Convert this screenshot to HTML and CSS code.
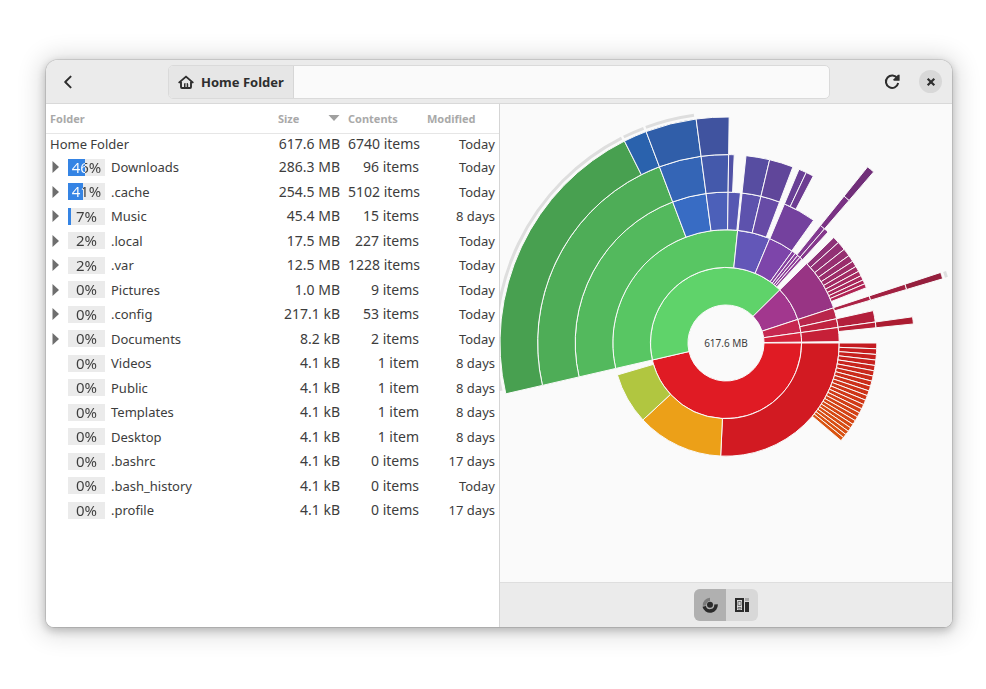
FILE: index.html
```html
<!DOCTYPE html>
<html lang="en">
<head>
  <meta charset="UTF-8">
  <meta name="viewport" content="width=device-width, initial-scale=1.0">
  <title>Disk Usage Analyzer</title>
  <link rel="stylesheet" href="styles.css">
</head>
<body>
  <div class="window">
    <header class="headerbar">
      <button class="icon-button" type="button" aria-label="Back">
        <svg width="16" height="16" viewBox="0 0 16 16"><path d="M10.6 2.6 5.2 8l5.4 5.4" fill="none" stroke="currentColor" stroke-width="2" stroke-linecap="round" stroke-linejoin="round"/></svg>
      </button>
      <nav class="pathbar">
        <button class="path-button" type="button">
          <svg width="16" height="16" viewBox="0 0 16 16"><path d="M1.3 8.4 8 2.6l6.7 5.800M3 8V13q0 1 1 1h8q1 0 1-1V8" fill="none" stroke="currentColor" stroke-width="1.900" stroke-linecap="round" stroke-linejoin="round"/><path d="M6 14V10.200q0-1.200 1.200-1.200h.3v5zM8.700 14V9h.3q1.200 0 1.200 1.200V14z" fill="currentColor"/></svg>
          Home Folder
        </button>
      </nav>
      <div class="header-end">
        <button class="icon-button" type="button" aria-label="Reload">
          <svg width="18" height="18" viewBox="0 0 18 18"><path d="M14.4 5.4A6.2 6.2 0 1 0 15.2 10" fill="none" stroke="currentColor" stroke-width="2"/><path d="M16.6 1.8v6h-6v-1.6l4.4-4.4z" fill="currentColor"/></svg>
        </button>
        <button class="close-button" type="button" aria-label="Close">
          <svg width="10" height="10" viewBox="0 0 10 10"><path d="M1.7 1.7l6.6 6.6M8.3 1.7 1.7 8.3" stroke="currentColor" stroke-width="2.2"/></svg>
        </button>
      </div>
    </header>
    <main class="content">
      <section class="folders">
        <table class="tree">
          <thead>
            <tr>
              <th class="col-name">Folder</th>
              <th class="col-size"><div class="sort">Size <svg width="12" height="6" viewBox="0 0 12 6"><path d="M.5 0h11L6 6z" fill="#a0a09f"/></svg></div></th>
              <th class="col-contents">Contents</th>
              <th class="col-modified">Modified</th>
            </tr>
          </thead>
          <tbody id="rows"></tbody>
        </table>
      </section>
      <section class="chart-pane">
        <svg class="chart" id="chart" viewBox="-226 -239 452 478" role="img" aria-label="Rings chart"></svg>
        <footer class="actionbar">
          <div class="switcher">
            <button class="switch active" type="button" aria-label="Rings chart">
              <svg width="16" height="16" viewBox="0 0 16 16"><path d="M2.4 8.6A5.800 5.800 0 0 1 8 2.4" fill="none" stroke="#7b7b7b" stroke-width="3.4"/><path d="M2.2 9.4A6 6 0 0 0 14 7.4" fill="none" stroke="#2b2b2b" stroke-width="3.6"/><circle cx="8" cy="7.800" r="3" fill="#2b2b2b"/></svg>
            </button>
            <button class="switch" type="button" aria-label="Treemap chart">
              <svg width="16" height="16" viewBox="0 0 16 16"><path d="M2 2h7v12H2z" fill="#ddd" stroke="#2b2b2b" stroke-width="2"/><path d="M4 4.500h3v4H4zM4 10.500h3v1.500H4z" fill="#d0d0d0" stroke="#777" stroke-width="1"/><path d="M11 5h4v10h-4z" fill="#2b2b2b"/><path d="M11 1h4v3h-4z" fill="#aaa"/></svg>
            </button>
          </div>
        </footer>
      </section>
    </main>
  </div>
  <script src="script.js"></script>
</body>
</html>
```
FILE: styles.css
```css
* {
  box-sizing: border-box;
}
body {
  margin: 0;
  min-height: 100vh;
  padding: 60px 34px 62px 46px;
  display: flex;
  background: #fff;
  color: #3d3d3d;
  font-family: "Noto Sans", sans-serif;
  font-size: 13px;
}
button {
  font: inherit;
  color: #2e2e2e;
  border: none;
  padding: 0;
  background: none;
  display: flex;
  align-items: center;
  justify-content: center;
}
.window {
  flex: 1;
  display: flex;
  flex-direction: column;
  border-radius: 12px 12px 8px 8px;
  overflow: hidden;
  background: #fafafa;
  box-shadow: 0 0 0 1px rgba(0, 0, 0, 0.1), 0 3px 8px 1px rgba(0, 0, 0, 0.2), 0 2px 24px 6px rgba(0, 0, 0, 0.14);
}
.headerbar {
  height: 44px;
  display: flex;
  align-items: center;
  padding: 0 10px 0 5px;
  background: #ebebeb;
  border-bottom: 1px solid #d9d9d9;
}
.icon-button {
  width: 34px;
  height: 34px;
}
.pathbar {
  flex: 1;
  height: 34px;
  display: flex;
  margin: 0 45px 0 83px;
  background: #fafafa;
  border: 1px solid #dadada;
  border-radius: 5px;
  overflow: hidden;
}
.path-button {
  gap: 7px;
  padding: 0 9px;
  background: #e6e6e6;
  border-right: 1px solid #d6d6d6;
  font-weight: bold;
}
.header-end {
  display: flex;
  align-items: center;
  gap: 10px;
}
.close-button {
  width: 23px;
  height: 23px;
  border-radius: 50%;
  background: #d8d8d8;
}
.content {
  flex: 1;
  display: grid;
  grid-template-columns: 1fr 1fr;
}
.folders {
  background: #fff;
}
.tree {
  width: 100%;
  table-layout: fixed;
  border-collapse: collapse;
}
.tree th {
  height: 29px;
  padding: 0 4px;
  border-bottom: 1px solid #e6e6e6;
  color: #a9a9a9;
  font-size: 11px;
  text-align: left;
}
.tree td {
  height: 24px;
  padding: 0 4px;
  line-height: 20px;
  text-align: right;
  white-space: nowrap;
}
.tree tbody tr:nth-child(odd) td {
  height: 25px;
}
.tree tbody tr:first-child td {
  height: 22px;
}
.tree td.name {
  text-align: left;
}
.tree td.number {
  font-size: 14px;
}
.col-size {
  width: 70px;
}
.col-contents {
  width: 79px;
}
.col-modified {
  width: 76px;
}
.sort {
  display: flex;
  align-items: center;
  justify-content: space-between;
}
.entry {
  display: flex;
  align-items: center;
}
.expander {
  width: 18px;
  height: 12px;
  justify-content: flex-start;
  padding-left: 2px;
}
.usage {
  width: 37px;
  height: 17px;
  margin-right: 6px;
  background: linear-gradient(to right, #3584e4 var(--used), #ebebeb var(--used));
}
/* the label turns white where it lies on the blue part */
.usage span {
  display: block;
  background: linear-gradient(to right, #fff var(--used), #3d3d3d var(--used));
  -webkit-background-clip: text;
  background-clip: text;
  color: transparent;
  font-size: 15px;
  line-height: 17px;
  text-align: center;
}
.chart-pane {
  display: flex;
  flex-direction: column;
  border-left: 1px solid #d5d5d5;
}
.chart {
  flex: 1 1 0;
  min-height: 0;
  width: 100%;
}
.chart path {
  stroke: #fafafa;
  stroke-width: 1;
}
.chart .more {
  fill: none;
  stroke: #dedede;
  stroke-width: 3;
}
.chart text {
  font-size: 10px;
  fill: #3d3d3d;
  text-anchor: middle;
}
.actionbar {
  height: 45px;
  display: flex;
  align-items: center;
  justify-content: center;
  background: #ebebeb;
  border-top: 1px solid #dedede;
}
.switcher {
  display: flex;
  border-radius: 6px;
  overflow: hidden;
  background: #d8d8d8;
}
.switch {
  width: 32px;
  height: 32px;
}
.switch.active {
  background: #b0b0b0;
}
```
FILE: script.js
```js
// name, percent, size, contents, modified, has children
const folders = [
  ['Downloads', 46, '286.3 MB', '96 items', 'Today', true],
  ['.cache', 41, '254.5 MB', '5102 items', 'Today', true],
  ['Music', 7, '45.4 MB', '15 items', '8 days', true],
  ['.local', 2, '17.5 MB', '227 items', 'Today', true],
  ['.var', 2, '12.5 MB', '1228 items', 'Today', true],
  ['Pictures', 0, '1.0 MB', '9 items', 'Today', true],
  ['.config', 0, '217.1 kB', '53 items', 'Today', true],
  ['Documents', 0, '8.2 kB', '2 items', 'Today', true],
  ['Videos', 0, '4.1 kB', '1 item', '8 days', false],
  ['Public', 0, '4.1 kB', '1 item', '8 days', false],
  ['Templates', 0, '4.1 kB', '1 item', '8 days', false],
  ['Desktop', 0, '4.1 kB', '1 item', '8 days', false],
  ['.bashrc', 0, '4.1 kB', '0 items', '17 days', false],
  ['.bash_history', 0, '4.1 kB', '0 items', 'Today', false],
  ['.profile', 0, '4.1 kB', '0 items', '17 days', false]
];

function cells(size, contents, modified) {
  return `<td class="number">${size}</td><td class="number">${contents}</td><td>${modified}</td>`;
}

let html = `<tr><td class="name">Home Folder</td>${cells('617.6 MB', '6740 items', 'Today')}</tr>`;
folders.forEach(([name, percent, size, contents, modified, children]) => {
  const arrow = '<svg width="7" height="12" viewBox="0 0 7 12"><path d="M.5 0 7 6 .5 12z" fill="#6e6e6e"/></svg>';
  const expander = children
    ? `<button class="expander" type="button" aria-label="Expand ${name}">${arrow}</button>`
    : '<span class="expander"></span>';
  // shares below 3% are too small to show in the bar
  const used = percent > 2 ? percent : 0;
  html += `<tr><td class="name"><div class="entry">${expander}<div class="usage" style="--used: ${used}%"><span>${percent}%</span></div>${name}</div></td>${cells(size, contents, modified)}</tr>`;
});
document.getElementById('rows').innerHTML = html;

// ring, start angle, end angle, color (clockwise from the right)
const segments = [
  [1, 0, 167, '#e01b24'],
  [1, 167, 315.4, '#5fd36a'],
  [1, 315.4, 341.8, '#a2378e'],
  [1, 341.8, 352, '#c62850'],
  [1, 352, 359.3, '#d3223a'],
  [2, 0, 92.7, '#d21a22'],
  [2, 92.7, 137.2, '#eca018'],
  [2, 137.2, 163.6, '#b1c640'],
  [2, 167, 275.9, '#58c663'],
  [2, 275.9, 292.7, '#6357b8'],
  [2, 292.7, 305.8, '#7d45aa'],
  [2, 305.8, 307.7, '#86409f'],
  [2, 307.7, 309.3, '#893e9b'],
  [2, 309.3, 310.8, '#8c3c98'],
  [2, 310.8, 312.2, '#8e3b95'],
  [2, 315.4, 341.9, '#983484'],
  [2, 341.9, 347.6, '#b9264b'],
  [2, 347.6, 352.1, '#c0233f'],
  [2, 352.1, 359.3, '#c62038'],
  [3, 167, 249.3, '#53b95d'],
  [3, 249.3, 262.4, '#386cc4'],
  [3, 262.4, 270.8, '#4c60b9'],
  [3, 270.8, 275.5, '#5658b2'],
  [3, 276.1, 283.4, '#5d52ad'],
  [3, 283.4, 290.8, '#674ba6'],
  [3, 292.8, 305.5, '#74419e'],
  [3, 308.8, 310.8, '#823a90'],
  [3, 310.8, 312.6, '#85388c'],
  [3, 341.8, 343.5, '#ac2346'],
  [3, 347.6, 352, '#b31f3b'],
  [3, 352, 354.2, '#b71e35'],
  [4, 167, 249.3, '#4ead57'],
  [4, 249.3, 262.4, '#3465b6'],
  [4, 262.4, 270.8, '#4459ab'],
  [4, 270.8, 272.5, '#5152a6'],
  [4, 276.1, 283.4, '#574da1'],
  [4, 283.4, 290.8, '#60469a'],
  [4, 292.8, 295.2, '#693f95'],
  [4, 295.2, 297.6, '#6d3c92'],
  [4, 308.8, 310.8, '#7a3284'],
  [4, 341.8, 343.5, '#a12141'],
  [4, 352, 354.2, '#ab1c31'],
  [5, 167, 243.3, '#48a050'],
  [5, 243.3, 249.3, '#2a62ad'],
  [5, 249.3, 262.4, '#305ea9'],
  [5, 262.4, 270.8, '#40539f'],
  [5, 308.8, 310.8, '#712f79'],
  [5, 341.8, 343.5, '#951f3d']
];

function mix(from, to, t) {
  return `rgb(${from.map((c, i) => Math.round(c + (to[i] - c) * t)).join(',')})`;
}

// files under Music
const music = [315.6, 318.2, 321.6, 324.6, 327.2, 329.5, 331.6, 333.5, 335.3, 336.9, 338.5];
for (let i = 0; i < music.length - 1; i++) {
  segments.push([3, music[i], music[i + 1], mix([142, 50, 120], [176, 36, 84], i / 9)]);
}

// files under Downloads, a little smaller each time
const count = 22;
let angle = 0;
for (let i = 0; i < count; i++) {
  const size = 2.2 - i * 0.035;
  segments.push([3, angle, angle + size, mix([196, 26, 32], [218, 84, 16], i / (count - 1))]);
  angle += size;
}

const inner = 38;
const thickness = 37.6;

function point(radius, degrees) {
  const a = degrees * Math.PI / 180;
  return `${(radius * Math.cos(a)).toFixed(2)} ${(radius * Math.sin(a)).toFixed(2)}`;
}

function sector(ring, start, end) {
  const r1 = inner + (ring - 1) * thickness;
  const r2 = r1 + thickness;
  const large = end - start > 180 ? 1 : 0;
  return `M${point(r1, start)}L${point(r2, start)}A${r2} ${r2} 0 ${large} 1 ${point(r2, end)}L${point(r1, end)}A${r1} ${r1} 0 ${large} 0 ${point(r1, start)}z`;
}

let chart = '';
segments.forEach(([ring, start, end, color]) => {
  chart += `<path d="${sector(ring, start, end)}" fill="${color}"/>`;
});

// outer arcs for folders that go deeper than the last ring
[[168, 243], [243.6, 249], [249.6, 262], [341.9, 343.4]].forEach(([start, end]) => {
  chart += `<path class="more" d="M${point(230, start)}A230 230 0 0 1 ${point(230, end)}"/>`;
});

chart += '<text x="0" y="4">617.6 MB</text>';
document.getElementById('chart').innerHTML = chart;
```
